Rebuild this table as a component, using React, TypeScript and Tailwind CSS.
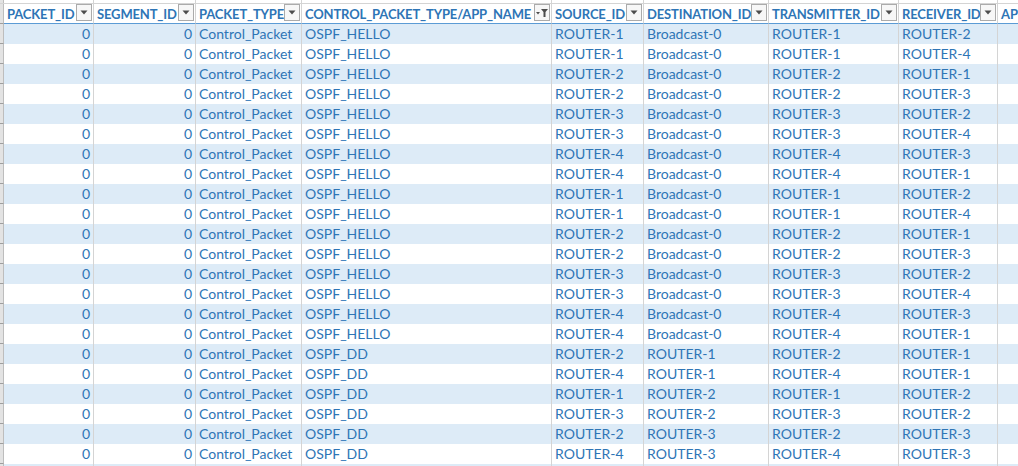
import React from "react";

const cols = [90, 102, 106, 250, 92, 125, 130, 99, 60];
const headers = [
  "PACKET_ID",
  "SEGMENT_ID",
  "PACKET_TYPE",
  "CONTROL_PACKET_TYPE/APP_NAME",
  "SOURCE_ID",
  "DESTINATION_ID",
  "TRANSMITTER_ID",
  "RECEIVER_ID",
  "APP_NAME",
];

type Row = [string, string, string, string, string];
const rows: Row[] = [
  ["OSPF_HELLO", "ROUTER-1", "Broadcast-0", "ROUTER-1", "ROUTER-2"],
  ["OSPF_HELLO", "ROUTER-1", "Broadcast-0", "ROUTER-1", "ROUTER-4"],
  ["OSPF_HELLO", "ROUTER-2", "Broadcast-0", "ROUTER-2", "ROUTER-1"],
  ["OSPF_HELLO", "ROUTER-2", "Broadcast-0", "ROUTER-2", "ROUTER-3"],
  ["OSPF_HELLO", "ROUTER-3", "Broadcast-0", "ROUTER-3", "ROUTER-2"],
  ["OSPF_HELLO", "ROUTER-3", "Broadcast-0", "ROUTER-3", "ROUTER-4"],
  ["OSPF_HELLO", "ROUTER-4", "Broadcast-0", "ROUTER-4", "ROUTER-3"],
  ["OSPF_HELLO", "ROUTER-4", "Broadcast-0", "ROUTER-4", "ROUTER-1"],
  ["OSPF_HELLO", "ROUTER-1", "Broadcast-0", "ROUTER-1", "ROUTER-2"],
  ["OSPF_HELLO", "ROUTER-1", "Broadcast-0", "ROUTER-1", "ROUTER-4"],
  ["OSPF_HELLO", "ROUTER-2", "Broadcast-0", "ROUTER-2", "ROUTER-1"],
  ["OSPF_HELLO", "ROUTER-2", "Broadcast-0", "ROUTER-2", "ROUTER-3"],
  ["OSPF_HELLO", "ROUTER-3", "Broadcast-0", "ROUTER-3", "ROUTER-2"],
  ["OSPF_HELLO", "ROUTER-3", "Broadcast-0", "ROUTER-3", "ROUTER-4"],
  ["OSPF_HELLO", "ROUTER-4", "Broadcast-0", "ROUTER-4", "ROUTER-3"],
  ["OSPF_HELLO", "ROUTER-4", "Broadcast-0", "ROUTER-4", "ROUTER-1"],
  ["OSPF_DD", "ROUTER-2", "ROUTER-1", "ROUTER-2", "ROUTER-1"],
  ["OSPF_DD", "ROUTER-4", "ROUTER-1", "ROUTER-4", "ROUTER-1"],
  ["OSPF_DD", "ROUTER-1", "ROUTER-2", "ROUTER-1", "ROUTER-2"],
  ["OSPF_DD", "ROUTER-3", "ROUTER-2", "ROUTER-3", "ROUTER-2"],
  ["OSPF_DD", "ROUTER-2", "ROUTER-3", "ROUTER-2", "ROUTER-3"],
  ["OSPF_DD", "ROUTER-4", "ROUTER-3", "ROUTER-4", "ROUTER-3"],
];

function DropButton({ filtered }: { filtered?: boolean }) {
  return (
    <div className="absolute right-[1px] top-[0px] w-[16px] h-[17px] border border-[#ababab] bg-[#f7f7f7] flex items-center justify-center">
      {filtered ? (
        <svg width="14" height="12" viewBox="0 0 14 12">
          <polygon points="1,5 5,5 3,7.5" fill="#4d4d4d" />
          <polygon points="6,2 13,2 10.5,5 10.5,10 8.5,10 8.5,5" fill="#4d4d4d" />
        </svg>
      ) : (
        <svg width="8" height="5" viewBox="0 0 8 5">
          <polygon points="0.5,0.5 7.5,0.5 4,4.5" fill="#4d4d4d" />
        </svg>
      )}
    </div>
  );
}

function RowHead() {
  return <div className="w-[4px] shrink-0 bg-[#e3e3e3] border-r border-[#bdbdbd] border-b border-b-[#9e9e9e]" />;
}

export default function App() {
  return (
    <div
      className="w-[1018px] h-[466px] overflow-hidden bg-white text-[#2e75b6]"
      style={{ fontFamily: "Lato, 'Open Sans', sans-serif" }}
    >
      {/* top sliver */}
      <div className="flex h-[4px] border-b border-[#d4d4d4]">
        <div className="w-[4px] shrink-0 bg-[#e3e3e3] border-r border-[#bdbdbd]" />
        <div className="flex">
          {cols.map((w, i) => (
            <div key={i} style={{ width: w }} className="shrink-0 border-r border-[#d4d4d4]" />
          ))}
        </div>
      </div>
      {/* header */}
      <div className="flex h-[20px]">
        <RowHead />
        {headers.map((h, i) => (
          <div
            key={i}
            style={{ width: cols[i] }}
            className="relative shrink-0 h-[20px] border-r border-[#d4d4d4] border-b border-b-[#5b9bd5] overflow-hidden"
          >
            <div className="pl-[3px] pt-[1px] text-[13px] leading-[18px] font-bold whitespace-nowrap tracking-[-0.15px]">
              {h}
            </div>
            {i < 8 && <DropButton filtered={i === 3} />}
          </div>
        ))}
      </div>
      {/* data rows */}
      {[...rows, null].map((r, ri) => (
        <div key={ri} className={"flex h-[20px] " + (ri % 2 === 0 ? "bg-[#ddebf7]" : "bg-white")}>
          <RowHead />
          {cols.map((w, ci) => {
            let text = "";
            let right = false;
            if (r) {
              if (ci === 0 || ci === 1) {
                text = "0";
                right = true;
              } else if (ci === 2) text = "Control_Packet";
              else if (ci >= 3 && ci <= 7) text = r[ci - 3];
            }
            return (
              <div
                key={ci}
                style={{ width: w }}
                className={
                  "shrink-0 h-[20px] border-r border-[#d4d4d4] text-[14px] leading-[20px] whitespace-nowrap overflow-hidden " +
                  (right ? "text-right pr-[3px]" : "pl-[3px]")
                }
              >
                {text}
              </div>
            );
          })}
        </div>
      ))}
    </div>
  );
}
